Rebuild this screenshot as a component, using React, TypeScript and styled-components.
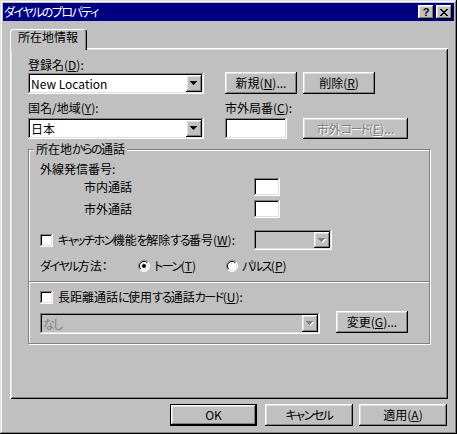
import React from "react";
import styled, { createGlobalStyle, css } from "styled-components";

const GlobalStyle = createGlobalStyle`
  html, body { margin: 0; padding: 0; background: #c0c0c0; }
  body {
    font-family: "Noto Sans CJK JP", "Noto Sans", sans-serif;
    font-size: 12px;
    line-height: 14px;
    color: #000;
    font-feature-settings: "palt";
  }
  *, *::before, *::after { box-sizing: border-box; }
  u { text-decoration: underline; text-underline-offset: 1px; }
`;

const raised = css`
  box-shadow: inset -1px -1px #000, inset 1px 1px #fff, inset -2px -2px #808080, inset 2px 2px #dfdfdf;
`;
const sunken = css`
  box-shadow: inset -1px -1px #fff, inset 1px 1px #808080, inset -2px -2px #dfdfdf, inset 2px 2px #000;
`;

const Kana = styled.span`
  letter-spacing: -1.5px;
`;

/* wraps kana runs so they get the narrower, proportional spacing of the original UI font */
const jp = (text: string) =>
  text.split(/([\u3040-\u30ff]+)/).map((part, i) =>
    /^[\u3040-\u30ff]+$/.test(part) ? <Kana key={i}>{part}</Kana> : <React.Fragment key={i}>{part}</React.Fragment>
  );

const Window = styled.div`
  width: 457px;
  height: 434px;
  padding: 3px;
  background: #c0c0c0;
  box-shadow: inset -1px -1px #000, inset 1px 1px #dfdfdf, inset -2px -2px #808080, inset 2px 2px #fff;
  display: flex;
  flex-direction: column;
`;

const TitleBar = styled.div`
  height: 18px;
  background: #000080;
  color: #fff;
  display: flex;
  align-items: center;
  padding: 0 2px 0 1px;
`;
const TitleText = styled.span`
  flex: 1;
  line-height: 18px;
  white-space: nowrap;
`;
const TitleButton = styled.div`
  width: 16px;
  height: 14px;
  background: #c0c0c0;
  ${raised}
  display: flex;
  align-items: center;
  justify-content: center;
  color: #000;
  font-family: "Liberation Sans", Arial, sans-serif;
  font-weight: bold;
  font-size: 11px;
  line-height: 11px;
  & + & { margin-left: 2px; }
`;

const Body = styled.div`
  flex: 1;
  display: flex;
  flex-direction: column;
  padding: 8px 7px 0;
`;
const TabStrip = styled.div`
  display: flex;
  position: relative;
  z-index: 1;
`;
const Tab = styled.div`
  width: 77px;
  height: 21px;
  margin-bottom: -2px;
  padding: 1px 0 0 8px;
  background: #c0c0c0;
  border-radius: 3px 3px 0 0;
  box-shadow: inset 1px 1px #fff, inset -1px 0 #000, inset -2px 0 #808080;
  white-space: nowrap;
`;
const Panel = styled.div`
  width: 438px;
  height: 351px;
  padding: 10px 0 0 18px;
  box-shadow: inset 1px 1px #fff, inset -1px -1px #000, inset 2px 2px #dfdfdf, inset -2px -2px #808080;
`;

const TopGrid = styled.div`
  display: grid;
  grid-template-columns: 176px auto;
  column-gap: 21px;
  row-gap: 7px;
`;
const Stack = styled.div<{ $gap: number }>`
  display: flex;
  flex-direction: column;
  gap: ${(p) => p.$gap}px;
`;
const ButtonRow = styled.div<{ $gap: number }>`
  display: flex;
  align-items: flex-end;
  align-self: end;
  gap: ${(p) => p.$gap}px;
`;
const Label = styled.div`
  height: 14px;
  line-height: 14px;
  white-space: nowrap;
`;

const Button = styled.button<{ $w: number; $h?: number; $default?: boolean }>`
  width: ${(p) => p.$w}px;
  height: ${(p) => p.$h ?? 22}px;
  flex: none;
  background: #c0c0c0;
  border: none;
  padding: 0;
  margin: 0;
  font: inherit;
  color: #000;
  white-space: nowrap;
  ${raised}
  ${(p) =>
    p.$default &&
    css`
      box-shadow: inset 0 0 0 1px #000, inset -2px -2px #000, inset 2px 2px #fff, inset -3px -3px #808080,
        inset 3px 3px #dfdfdf;
    `}
  &:disabled {
    color: #808080;
    text-shadow: 1px 1px 0 #fff;
  }
`;

const ComboBox = styled.div<{ $w: number; $h?: number; $disabled?: boolean }>`
  width: ${(p) => p.$w}px;
  height: ${(p) => p.$h ?? 21}px;
  flex: none;
  background: ${(p) => (p.$disabled ? "#c0c0c0" : "#fff")};
  ${sunken}
  padding: 2px;
  display: flex;
  align-items: center;
`;
const ComboText = styled.span<{ $disabled?: boolean }>`
  flex: 1;
  padding-left: 1px;
  line-height: 16px;
  color: ${(p) => (p.$disabled ? "#808080" : "#000")};
  white-space: nowrap;
`;
const DropButton = styled.span`
  width: 16px;
  align-self: stretch;
  background: #c0c0c0;
  ${raised}
  display: flex;
  align-items: center;
  justify-content: center;
`;

const TextBox = styled.div<{ $w: number; $h: number }>`
  width: ${(p) => p.$w}px;
  height: ${(p) => p.$h}px;
  flex: none;
  background: #fff;
  ${sunken}
`;

const FieldLine = styled.div`
  display: flex;
  gap: 16px;
`;

const Group = styled.div`
  width: 402px;
  margin-top: 10px;
  border: 1px solid #808080;
  box-shadow: 1px 1px 0 #fff, inset 1px 1px 0 #fff;
  padding: 0 0 9px 11px;
`;
const Legend = styled.div`
  width: fit-content;
  height: 14px;
  margin: -8px 0 0 -6px;
  padding: 0 2px;
  background: #c0c0c0;
  line-height: 14px;
  white-space: nowrap;
`;
const SubHeading = styled(Label)`
  margin-top: 6px;
`;
const NumberRow = styled.div<{ $mt: number }>`
  display: grid;
  grid-template-columns: 214px 26px;
  align-items: center;
  height: 18px;
  margin-top: ${(p) => p.$mt}px;
`;
const Indented = styled.span`
  padding-left: 44px;
  white-space: nowrap;
`;
const CatchRow = styled.div`
  display: grid;
  grid-template-columns: 214px 78px;
  align-items: center;
  height: 20px;
  margin-top: 12px;
`;
const CheckLabel = styled.label`
  display: flex;
  align-items: center;
  gap: 5px;
  white-space: nowrap;
  height: 14px;
`;
const CheckBox = styled.span`
  width: 13px;
  height: 13px;
  flex: none;
  background: #fff;
  ${sunken}
`;
const DialRow = styled.div`
  display: grid;
  grid-template-columns: 98px 88px auto;
  align-items: center;
  height: 14px;
  margin-top: 9px;
  white-space: nowrap;
`;
const RadioLabel = styled.label`
  display: flex;
  align-items: center;
  gap: 4px;
`;
const Separator = styled.div`
  height: 2px;
  margin: 8px 0 0 -11px;
  border-top: 1px solid #808080;
  border-bottom: 1px solid #fff;
`;
const CardCheckRow = styled.div`
  margin-top: 7px;
  height: 14px;
  display: flex;
  align-items: center;
`;
const CardRow = styled.div`
  margin-top: 7px;
  display: flex;
  align-items: flex-start;
  gap: 16px;
  & > ${ComboBox} { margin-top: 2px; }
`;

const Footer = styled.div`
  display: flex;
  justify-content: flex-end;
  gap: 6px;
  margin-top: 5px;
  & > :first-child { margin-right: 2px; }
`;

const Arrow = ({ disabled }: { disabled?: boolean }) => (
  <svg width="8" height="5" viewBox="0 0 8 5" shapeRendering="crispEdges">
    {disabled && (
      <g fill="#fff">
        <rect x="1" y="1" width="7" height="1" />
        <rect x="2" y="2" width="5" height="1" />
        <rect x="3" y="3" width="3" height="1" />
        <rect x="4" y="4" width="1" height="1" />
      </g>
    )}
    <g fill={disabled ? "#808080" : "#000"}>
      <rect x="0" y="0" width="7" height="1" />
      <rect x="1" y="1" width="5" height="1" />
      <rect x="2" y="2" width="3" height="1" />
      <rect x="3" y="3" width="1" height="1" />
    </g>
  </svg>
);

const CloseGlyph = () => (
  <svg width="8" height="7" viewBox="0 0 8 7" shapeRendering="crispEdges" fill="#000">
    <rect x="0" y="0" width="2" height="1" />
    <rect x="6" y="0" width="2" height="1" />
    <rect x="1" y="1" width="2" height="1" />
    <rect x="5" y="1" width="2" height="1" />
    <rect x="2" y="2" width="4" height="1" />
    <rect x="3" y="3" width="2" height="1" />
    <rect x="2" y="4" width="4" height="1" />
    <rect x="1" y="5" width="2" height="1" />
    <rect x="5" y="5" width="2" height="1" />
    <rect x="0" y="6" width="2" height="1" />
    <rect x="6" y="6" width="2" height="1" />
  </svg>
);

const Radio = ({ checked }: { checked?: boolean }) => (
  <svg width="12" height="12" viewBox="0 0 12 12">
    <circle cx="6" cy="6" r="5.5" fill="#fff" />
    <path d="M9.9 2.1 A5.5 5.5 0 0 0 2.1 9.9" stroke="#808080" fill="none" />
    <path d="M2.1 9.9 A5.5 5.5 0 0 0 9.9 2.1" stroke="#fff" fill="none" />
    <path d="M9.2 2.8 A4.5 4.5 0 0 0 2.8 9.2" stroke="#000" fill="none" />
    <path d="M2.8 9.2 A4.5 4.5 0 0 0 9.2 2.8" stroke="#dfdfdf" fill="none" />
    {checked && <circle cx="6" cy="6" r="2" fill="#000" />}
  </svg>
);

const Combo = ({ w, h, text, disabled }: { w: number; h?: number; text?: string; disabled?: boolean }) => (
  <ComboBox $w={w} $h={h} $disabled={disabled}>
    <ComboText $disabled={disabled}>{text ? jp(text) : null}</ComboText>
    <DropButton>
      <Arrow disabled={disabled} />
    </DropButton>
  </ComboBox>
);

export default function App() {
  return (
    <>
      <GlobalStyle />
      <Window>
        <TitleBar>
          <TitleText>{jp("ダイヤルのプロパティ")}</TitleText>
          <TitleButton>?</TitleButton>
          <TitleButton>
            <CloseGlyph />
          </TitleButton>
        </TitleBar>
        <Body>
          <TabStrip>
            <Tab>所在地情報</Tab>
          </TabStrip>
          <Panel>
            <TopGrid>
              <Stack $gap={1}>
                <Label>
                  登録名(<u>D</u>):
                </Label>
                <Combo w={176} text="New Location" />
              </Stack>
              <ButtonRow $gap={6}>
                <Button $w={72}>
                  新規(<u>N</u>)...
                </Button>
                <Button $w={72}>
                  削除(<u>R</u>)
                </Button>
              </ButtonRow>
              <Stack $gap={3}>
                <Label>
                  国名/地域(<u>Y</u>):
                </Label>
                <Combo w={176} text="日本" />
              </Stack>
              <Stack $gap={3}>
                <Label>
                  市外局番(<u>C</u>):
                </Label>
                <FieldLine>
                  <TextBox $w={62} $h={21} />
                  <Button $w={105} $h={21} disabled>
                    市外{jp("コード")}(<u>E</u>)...
                  </Button>
                </FieldLine>
              </Stack>
            </TopGrid>

            <Group>
              <Legend>所在地{jp("からの")}通話</Legend>
              <SubHeading>外線発信番号:</SubHeading>
              <NumberRow $mt={2}>
                <Indented>市内通話</Indented>
                <TextBox $w={26} $h={18} />
              </NumberRow>
              <NumberRow $mt={4}>
                <Indented>市外通話</Indented>
                <TextBox $w={26} $h={18} />
              </NumberRow>
              <CatchRow>
                <CheckLabel>
                  <CheckBox />
                  <span>
                    {jp("キャッチホン機能を解除する番号")}(<u>W</u>):
                  </span>
                </CheckLabel>
                <Combo w={78} h={20} disabled />
              </CatchRow>
              <DialRow>
                <span>{jp("ダイヤル方法")}：</span>
                <RadioLabel>
                  <Radio checked />
                  <span>
                    {jp("トーン")}(<u>T</u>)
                  </span>
                </RadioLabel>
                <RadioLabel>
                  <Radio />
                  <span>
                    {jp("パルス")}(<u>P</u>)
                  </span>
                </RadioLabel>
              </DialRow>
              <Separator />
              <CardCheckRow>
                <CheckLabel>
                  <CheckBox />
                  <span>
                    {jp("長距離通話に使用する通話カード")}(<u>U</u>):
                  </span>
                </CheckLabel>
              </CardCheckRow>
              <CardRow>
                <Combo w={280} text="なし" disabled />
                <Button $w={72}>
                  変更(<u>G</u>)...
                </Button>
              </CardRow>
            </Group>
          </Panel>
          <Footer>
            <Button $w={87} $default>
              OK
            </Button>
            <Button $w={88}>{jp("キャンセル")}</Button>
            <Button $w={88}>
              適用(<u>A</u>)
            </Button>
          </Footer>
        </Body>
      </Window>
    </>
  );
}
